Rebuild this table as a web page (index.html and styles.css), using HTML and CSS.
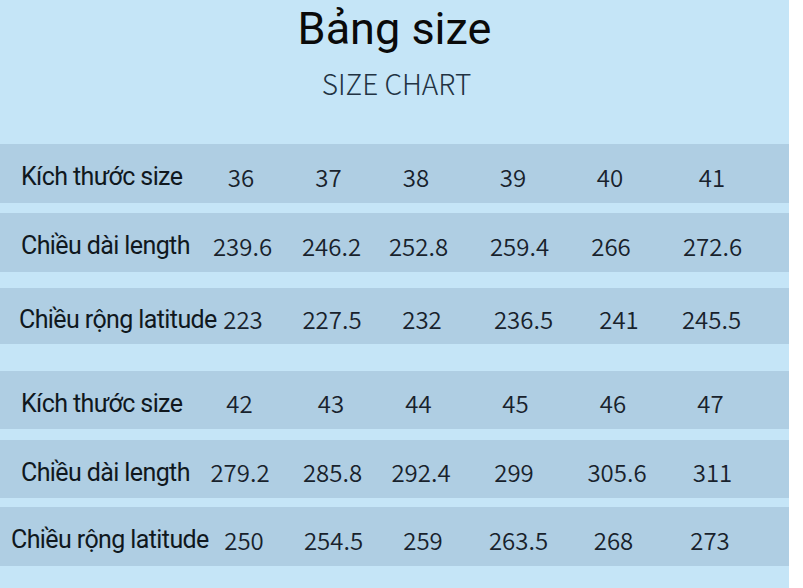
FILE: index.html
```html
<!DOCTYPE html>
<html lang="vi">
<head>
<meta charset="utf-8">
<title>Bảng size</title>
<link rel="stylesheet" href="styles.css">
</head>
<body>
<div class="sheet">
  <header class="head">
    <h1 class="title">Bảng size</h1>
    <p class="subtitle">SIZE CHART</p>
  </header>
  <div class="table">
    <div class="row r1">
      <span class="label">Kích thước size</span>
      <span class="val">36</span><span class="val">37</span><span class="val">38</span><span class="val">39</span><span class="val">40</span><span class="val">41</span>
    </div>
    <div class="row r2">
      <span class="label">Chiều dài length</span>
      <span class="val">239.6</span><span class="val">246.2</span><span class="val">252.8</span><span class="val">259.4</span><span class="val">266</span><span class="val">272.6</span>
    </div>
    <div class="row r3">
      <span class="label">Chiều rộng latitude</span>
      <span class="val">223</span><span class="val">227.5</span><span class="val">232</span><span class="val">236.5</span><span class="val">241</span><span class="val">245.5</span>
    </div>
    <div class="row r4">
      <span class="label">Kích thước size</span>
      <span class="val">42</span><span class="val">43</span><span class="val">44</span><span class="val">45</span><span class="val">46</span><span class="val">47</span>
    </div>
    <div class="row r5">
      <span class="label">Chiều dài length</span>
      <span class="val">279.2</span><span class="val">285.8</span><span class="val">292.4</span><span class="val">299</span><span class="val">305.6</span><span class="val">311</span>
    </div>
    <div class="row r6">
      <span class="label">Chiều rộng latitude</span>
      <span class="val">250</span><span class="val">254.5</span><span class="val">259</span><span class="val">263.5</span><span class="val">268</span><span class="val">273</span>
    </div>
  </div>
</div>
</body>
</html>
```

FILE: styles.css
```css
html, body {
  margin: 0;
  padding: 0;
  background: #ffffff;
}

.sheet {
  width: 789px;
  height: 588px;
  background: #c5e5f7;
  overflow: hidden;
}

.head {
  height: 144px;
  display: flex;
  flex-direction: column;
  align-items: center;
  box-sizing: border-box;
  padding-top: 4px;
}

.title {
  margin: 0;
  font-family: Roboto, "Noto Sans", sans-serif;
  font-weight: 400;
  font-size: 45px;
  line-height: 50px;
  color: #0a0a0a;
}

.subtitle {
  margin: 12px 0 0 4px;
  font-family: "Noto Sans CJK SC", "Noto Sans", sans-serif;
  font-weight: 300;
  font-size: 28px;
  line-height: 34px;
  color: #223343;
}

.table {
  display: flex;
  flex-direction: column;
}

.row {
  display: grid;
  align-items: center;
  height: 59px;
  background: #afcee3;
  box-sizing: border-box;
  padding-top: 5px;
}

.r1 { grid-template-columns: 196px 90px 85px 90px 104px 90px 114px; }
.r2 { grid-template-columns: 197.5px 90px 88px 86px 116px 67px 136px; margin-top: 10px; }
.r3 { grid-template-columns: 198px 90px 88px 92px 111px 80px 105px; margin-top: 16px; height: 56px; }
.r4 { grid-template-columns: 194.5px 90px 93px 82px 112px 83px 112px; margin-top: 27px; height: 58px; }
.r5 { grid-template-columns: 195px 90px 95px 82px 104px 102px 89px; margin-top: 11px; height: 58px; }
.r6 { grid-template-columns: 199px 90px 89px 90px 101px 89px 104px; margin-top: 9px; }

.label {
  font-family: Roboto, "Noto Sans", sans-serif;
  font-size: 25px;
  letter-spacing: -0.6px;
  color: #10181e;
  white-space: nowrap;
  padding-left: 21px;
  padding-top: 1px;
}

.r3 .label { padding-left: 19px; }
.r6 .label { padding-left: 11px; }

.val {
  font-family: "Noto Sans CJK SC", "Noto Sans", sans-serif;
  font-weight: 350;
  font-size: 24px;
  color: #18222c;
  text-align: center;
  white-space: nowrap;
}
```
